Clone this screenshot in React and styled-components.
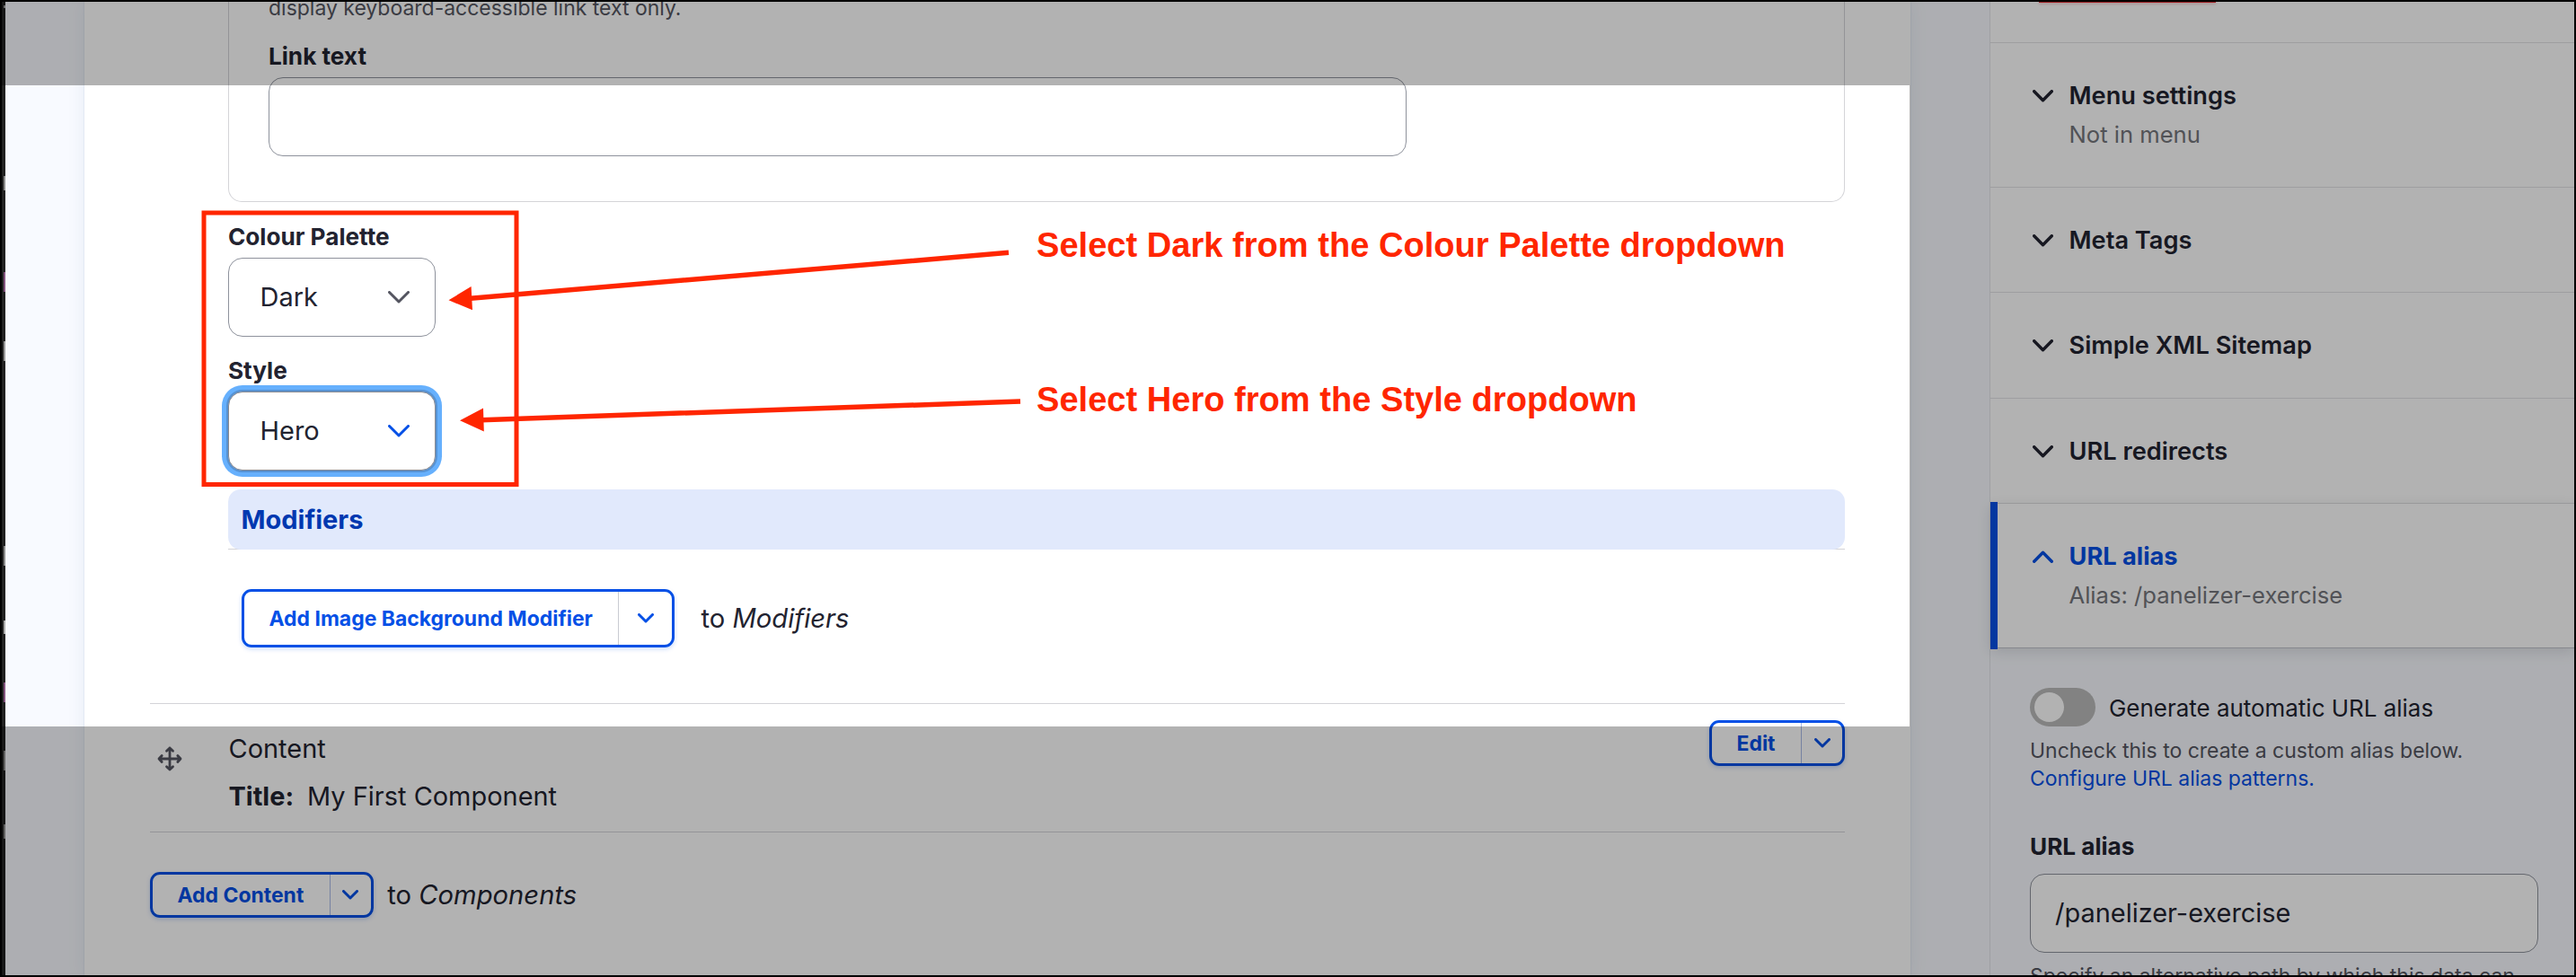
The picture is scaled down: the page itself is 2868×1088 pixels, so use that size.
import React from 'react';
import styled, { createGlobalStyle, css } from 'styled-components';

const ink = '#222330';
const blue = '#0550e6';
const muted = '#545560';
const rule = '#d4d4d8';
const page = '#f8faff';
const marker = '#ff2600';

const GlobalStyle = createGlobalStyle`
  * { box-sizing: border-box; }
  body {
    margin: 0;
    background: #000;
    color: ${ink};
    font-family: Inter, "Liberation Sans", sans-serif;
    font-size: 28.95px;
    line-height: 36px;
  }
`;

const Window = styled.div`
  position: relative;
  display: flex;
  width: 2868px;
  height: 1088px;
  padding: 2px;
  background: #000;
  overflow: hidden;
`;

const Toolbar = styled.div`
  display: flex;
  flex-direction: column;
  align-items: flex-end;
  flex: 0 0 4px;
  background: #222;
`;

const ToolbarMark = styled.div`
  width: 2px;
  height: ${(p) => p.$h}px;
  margin-top: ${(p) => p.$gap}px;
  background: ${(p) => p.$color};
`;

const Page = styled.div`
  display: flex;
  flex: 1;
  padding-left: 88px;
  background: ${page};
  overflow: hidden;
`;

const Card = styled.main`
  display: flex;
  flex-direction: column;
  flex: 0 0 2033px;
  height: 1084px;
  padding: 0 73px;
  background: #fff;
  box-shadow: 0 0 20px rgba(10, 60, 110, 0.08), 0 0 2px rgba(10, 60, 110, 0.14);
`;

const Widget = styled.section`
  display: flex;
  flex-direction: column;
  height: 781px;
  padding-left: 87px;
`;

const LinkGroup = styled.div`
  height: 223px;
  padding-left: 44px;
  border: 1px solid ${rule};
  border-top: 0;
  border-radius: 0 0 15px 15px;
`;

const Description = styled.p`
  margin: ${(p) => p.$top || 0}px 0 0;
  color: ${muted};
  font-size: 22.97px;
  line-height: ${(p) => p.$line || 31}px;
  white-space: nowrap;
`;

const Label = styled.label`
  display: block;
  margin-top: ${(p) => p.$top}px;
  margin-bottom: ${(p) => p.$bottom || 7}px;
  font-size: 26.15px;
  font-weight: 700;
  line-height: 32px;
`;

const Field = styled.div`
  display: flex;
  align-items: center;
  width: ${(p) => p.$width}px;
  height: 88px;
  padding-left: 27px;
  border: 1px solid #8e929c;
  border-radius: 16px;
  background: #fff;
`;

const Select = styled.div`
  display: flex;
  align-items: center;
  justify-content: space-between;
  width: 231px;
  height: 88px;
  padding: 0 28px 0 34.5px;
  border: 1px solid #8e929c;
  border-radius: 16px;
  background: #fff;
  ${(p) =>
    p.$focused &&
    css`
      border-color: #8a8a90;
      box-shadow: 0 0 0 2px #5792d2, 0 0 0 7px #66b0fd;
    `}
`;

const ModifiersHeader = styled.div`
  height: 67px;
  margin-top: 21px;
  border-bottom: 1px solid ${rule};
`;

const ModifiersTitle = styled.h4`
  height: 67px;
  margin: 0;
  padding-left: 14.5px;
  border-radius: 14px;
  background: #e1e9fc;
  color: #0038b0;
  font-size: 29px;
  font-weight: 700;
  line-height: 67px;
`;

const AddLine = styled.div`
  display: flex;
  align-items: center;
  gap: ${(p) => p.$gap}px;
  margin: ${(p) => p.$top}px 0 0 ${(p) => p.$left || 0}px;
`;

const AddTarget = styled.span`
  font-size: 29.2px;
  white-space: nowrap;
`;

const SplitButton = styled.div`
  display: flex;
  height: ${(p) => (p.$large ? 65 : 51)}px;
  border: 3px solid ${blue};
  border-radius: 11px;
  color: ${blue};
  box-shadow: 0 2px 5px rgba(5, 80, 230, 0.2);
`;

const SplitMain = styled.span`
  display: flex;
  align-items: center;
  padding: 0 28.5px 0 27.5px;
  font-size: 22.95px;
  font-weight: 700;
  white-space: nowrap;
`;

const SplitToggle = styled.span`
  display: flex;
  align-items: center;
  justify-content: center;
  width: ${(p) => (p.$large ? 60 : 46)}px;
  border-left: 1px solid ${(p) => (p.$large ? '#c9cbd2' : '#a9bbe8')};
`;

const Row = styled.div`
  display: flex;
  height: 144px;
  border-top: 1px solid ${rule};
  border-bottom: 1px solid ${rule};
`;

const DragHandle = styled.div`
  flex: 0 0 87.5px;
  padding: 46.5px 0 0 7.5px;
  line-height: 0;
`;

const RowSummary = styled.div`
  display: flex;
  flex-direction: column;
  flex: 1;
  gap: 17px;
  padding-top: 32px;
`;

const TitleLine = styled.div`
  display: flex;
  gap: 15px;
`;

const RowActions = styled.div`
  padding-top: 18px;
`;

const Sidebar = styled.aside`
  display: flex;
  flex-direction: column;
  flex: 0 0 651px;
  height: 1084px;
  margin-left: 88px;
  border-left: 1px solid #e4e6ea;
  background: ${page};
`;

const ActionArea = styled.div`
  flex: 0 0 46px;
  padding-left: 54px;
  border-bottom: 1px solid #e2e2e5;
  background: #fff;
`;

const DangerEdge = styled.div`
  width: 197px;
  height: 1px;
  background: #d8232a;
  box-shadow: 0 1px 3px rgba(216, 35, 42, 0.5);
`;

const Panel = styled.div`
  position: relative;
  display: flex;
  gap: 17.5px;
  flex: 0 0 ${(p) => p.$h}px;
  padding: 41px 0 0 47px;
  border-bottom: 1px solid ${(p) => (p.$active ? '#c2c5cc' : '#e2e2e5')};
  background: #fff;
  box-shadow: ${(p) => (p.$active ? '0 4px 14px rgba(34, 35, 48, 0.13)' : 'none')};
  color: ${(p) => (p.$active ? blue : ink)};
`;

const ActiveBar = styled.div`
  position: absolute;
  left: 0;
  top: -2px;
  bottom: -2px;
  width: 8px;
  background: ${blue};
`;

const PanelIcon = styled.div`
  flex: 0 0 23px;
  padding-top: 11px;
  line-height: 0;
`;

const PanelTitle = styled.div`
  font-size: 27.2px;
  font-weight: ${(p) => (p.$active ? 700 : 600)};
  line-height: 36px;
`;

const PanelSummary = styled.div`
  margin-top: 9px;
  color: #75767c;
  font-size: 25.6px;
  line-height: 32px;
`;

const PanelBody = styled.div`
  flex: none;
  padding: 44px 0 0 44px;
`;

const SwitchLine = styled.div`
  display: flex;
  gap: 15px;
  height: 43px;
  font-size: 25.95px;
  line-height: 45px;
`;

const Switch = styled.span`
  width: 73px;
  height: 43px;
  padding: 5px;
  border-radius: 22px;
  background: #bababa;
`;

const Knob = styled.span`
  display: block;
  width: 33px;
  height: 33px;
  border-radius: 50%;
  background: #fff;
`;

const Link = styled.a`
  color: ${blue};
`;

const Spotlight = styled.div`
  position: absolute;
  left: 2px;
  top: 95px;
  width: 2124px;
  height: 714px;
  box-shadow: 0 0 0 3000px rgba(0, 0, 0, 0.3);
`;

const Markup = styled.svg`
  position: absolute;
  left: 0;
  top: 0;
`;

const Note = styled.div`
  position: absolute;
  left: 1154px;
  top: ${(p) => p.$top}px;
  color: ${marker};
  font-family: "Liberation Sans", Arial, sans-serif;
  font-size: 38.1px;
  font-weight: 700;
  line-height: 44px;
  white-space: nowrap;
`;

function Chevron({ width, height, stroke = 3, color = 'currentColor', up }) {
  const i = stroke / 2;
  const [a, b] = up ? [height - i, i + 0.5] : [i, height - i - 0.5];
  return (
    <svg width={width} height={height} viewBox={`0 0 ${width} ${height}`} fill="none">
      <path
        d={`M${i} ${a}L${width / 2} ${b}L${width - i} ${a}`}
        stroke={color}
        strokeWidth={stroke}
        strokeLinecap="round"
        strokeLinejoin="round"
      />
    </svg>
  );
}

function MoveIcon() {
  return (
    <svg width="28" height="28" viewBox="0 0 28 28" fill="none" stroke={muted} strokeWidth="2.8" strokeLinecap="round" strokeLinejoin="round">
      <path d="M14 2V26M2 14H26M10.5 5.2L14 2L17.5 5.2M10.5 22.8L14 26L17.5 22.8M5.2 10.5L2 14L5.2 17.5M22.8 10.5L26 14L22.8 17.5" />
    </svg>
  );
}

function DropButton({ children, large }) {
  return (
    <SplitButton $large={large}>
      <SplitMain>{children}</SplitMain>
      <SplitToggle $large={large}>
        <Chevron width={18} height={11} />
      </SplitToggle>
    </SplitButton>
  );
}

function SidePanel({ title, summary, height, active }) {
  return (
    <Panel $h={height} $active={active}>
      {active && <ActiveBar />}
      <PanelIcon>
        <Chevron width={23} height={14} stroke={3.4} up={active} />
      </PanelIcon>
      <div>
        <PanelTitle $active={active}>{title}</PanelTitle>
        {summary && <PanelSummary>{summary}</PanelSummary>}
      </div>
    </Panel>
  );
}

const marks = [
  { gap: 4, h: 3, color: '#999' },
  { gap: 187, h: 16, color: '#8c8c8c' },
  { gap: 91, h: 22, color: '#85537f' },
  { gap: 55, h: 22, color: '#999' },
  { gap: 206, h: 22, color: '#8c8c8c' },
  { gap: 61, h: 15, color: '#aaa' },
  { gap: 54, h: 22, color: '#85537f' },
  { gap: 54, h: 22, color: '#8c8c8c' },
  { gap: 60, h: 16, color: '#8c8c8c' },
];

export default function App() {
  return (
    <>
      <GlobalStyle />
      <Window>
        <Toolbar>
          {marks.map((m, i) => (
            <ToolbarMark key={i} $gap={m.gap} $h={m.h} $color={m.color} />
          ))}
        </Toolbar>
        <Page>
          <Card>
            <Widget>
              <LinkGroup>
                <Description $top={-8} $line={30}>display keyboard-accessible link text only.</Description>
                <Label $top={23}>Link text</Label>
                <Field $width={1267} />
              </LinkGroup>
              <Label $top={23}>Colour Palette</Label>
              <Select>
                Dark
                <Chevron width={24} height={14} color={muted} />
              </Select>
              <Label $top={22}>Style</Label>
              <Select $focused>
                Hero
                <Chevron width={24} height={14} color={blue} />
              </Select>
              <ModifiersHeader>
                <ModifiersTitle>Modifiers</ModifiersTitle>
              </ModifiersHeader>
              <AddLine $top={44} $left={15} $gap={29}>
                <DropButton large>Add Image Background Modifier</DropButton>
                <AddTarget>to <em>Modifiers</em></AddTarget>
              </AddLine>
            </Widget>
            <Row>
              <DragHandle>
                <MoveIcon />
              </DragHandle>
              <RowSummary>
                <span>Content</span>
                <TitleLine>
                  <b>Title:</b>
                  <span>My First Component</span>
                </TitleLine>
              </RowSummary>
              <RowActions>
                <DropButton>Edit</DropButton>
              </RowActions>
            </Row>
            <AddLine $top={44} $gap={15.5}>
              <DropButton>Add Content</DropButton>
              <AddTarget>to <em>Components</em></AddTarget>
            </AddLine>
          </Card>
          <Sidebar>
            <ActionArea>
              <DangerEdge />
            </ActionArea>
            <SidePanel height={161} title="Menu settings" summary="Not in menu" />
            <SidePanel height={117} title="Meta Tags" />
            <SidePanel height={118} title="Simple XML Sitemap" />
            <SidePanel height={117} title="URL redirects" />
            <SidePanel height={161} title="URL alias" summary="Alias: /panelizer-exercise" active />
            <PanelBody>
              <SwitchLine>
                <Switch>
                  <Knob />
                </Switch>
                Generate automatic URL alias
              </SwitchLine>
              <Description $top={12}>
                Uncheck this to create a custom alias below.
                <br />
                <Link>Configure URL alias patterns.</Link>
              </Description>
              <Label $top={44} $bottom={14}>URL alias</Label>
              <Field $width={566}>/panelizer-exercise</Field>
              <Description $top={11}>Specify an alternative path by which this data can</Description>
            </PanelBody>
          </Sidebar>
        </Page>
        <Spotlight />
        <Markup width="2868" height="1088" viewBox="0 0 2868 1088" fill="none">
          <rect x="227" y="237" width="348" height="302.5" stroke={marker} strokeWidth="5" />
          <path d="M524 332.2L1123 281.3M536 467.7L1136 447" stroke={marker} strokeWidth="5.5" />
          <path d="M499.5 334.3L524.6 319L526 345.3ZM512 468.3L538 454.6L538.8 480.6Z" fill={marker} />
        </Markup>
        <Note $top={251}>Select Dark from the Colour Palette dropdown</Note>
        <Note $top={423}>Select Hero from the Style dropdown</Note>
      </Window>
    </>
  );
}
